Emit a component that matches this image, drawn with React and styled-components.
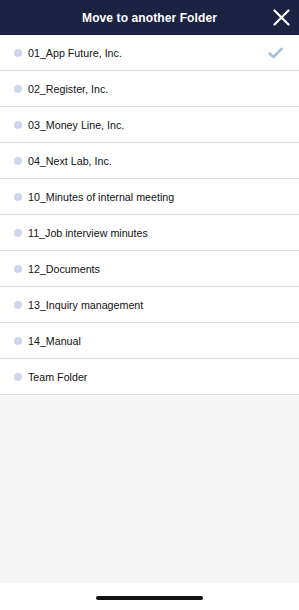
import React from "react";
import styled, { createGlobalStyle } from "styled-components";

const GlobalStyle = createGlobalStyle`
  html, body {
    margin: 0;
    padding: 0;
    background: #ffffff;
  }
  body {
    font-family: "Liberation Sans", Arial, sans-serif;
  }
`;

const Screen = styled.div`
  width: 299px;
  height: 610px;
  display: flex;
  flex-direction: column;
  background: #ffffff;
  overflow: hidden;
`;

const Header = styled.header`
  height: 35px;
  flex-shrink: 0;
  background: #1c2342;
  display: flex;
  align-items: center;
  justify-content: center;
  position: relative;
`;

const Title = styled.h1`
  margin: 0;
  color: #ffffff;
  font-size: 12px;
  font-weight: 700;
  letter-spacing: 0.1px;
`;

const CloseButton = styled.button`
  position: absolute;
  right: 9px;
  top: 9px;
  width: 17px;
  height: 17px;
  padding: 0;
  border: 0;
  background: none;
  display: flex;
  align-items: center;
  justify-content: center;
`;

const List = styled.ul`
  list-style: none;
  margin: 0;
  padding: 0;
`;

const Row = styled.li`
  height: 35px;
  display: flex;
  align-items: center;
  padding: 0 14px;
  border-bottom: 1px solid #dcdcdc;
  background: #ffffff;
`;

const Dot = styled.span`
  width: 8px;
  height: 8px;
  border-radius: 50%;
  background: #cdd6ee;
  flex-shrink: 0;
  margin-right: 6px;
`;

const Name = styled.span`
  flex: 1;
  font-size: 10.7px;
  color: #111111;
`;

const Check = styled.svg`
  width: 15px;
  height: 12px;
  margin-right: 2px;
`;

const Filler = styled.div`
  flex: 1;
  background: #f5f5f5;
`;

const HomeBar = styled.div`
  height: 27px;
  flex-shrink: 0;
  display: flex;
  align-items: center;
  justify-content: center;
  background: #ffffff;
  padding-top: 2px;
  box-sizing: border-box;
  span {
    display: block;
    width: 107px;
    height: 4px;
    border-radius: 2px;
    background: #111111;
  }
`;

const folders = [
  "01_App Future, Inc.",
  "02_Register, Inc.",
  "03_Money Line, Inc.",
  "04_Next Lab, Inc.",
  "10_Minutes of internal meeting",
  "11_Job interview minutes",
  "12_Documents",
  "13_Inquiry management",
  "14_Manual",
  "Team Folder",
];

export default function App() {
  const selected = 0;
  return (
    <>
      <GlobalStyle />
      <Screen>
        <Header>
          <Title>Move to another Folder</Title>
          <CloseButton aria-label="close">
            <svg width="17" height="17" viewBox="0 0 17 17">
              <path d="M1.5 1.5 L15.5 15.5 M15.5 1.5 L1.5 15.5" stroke="#ffffff" strokeWidth="2.2" strokeLinecap="round" />
            </svg>
          </CloseButton>
        </Header>
        <List>
          {folders.map((name, i) => (
            <Row key={name}>
              <Dot />
              <Name>{name}</Name>
              {i === selected && (
                <Check viewBox="0 0 15 12">
                  <path d="M1.5 6.5 L5.5 10 L13.5 1.8" fill="none" stroke="#a9bde0" strokeWidth="2.6" strokeLinecap="round" strokeLinejoin="round" />
                </Check>
              )}
            </Row>
          ))}
        </List>
        <Filler />
        <HomeBar>
          <span />
        </HomeBar>
      </Screen>
    </>
  );
}
